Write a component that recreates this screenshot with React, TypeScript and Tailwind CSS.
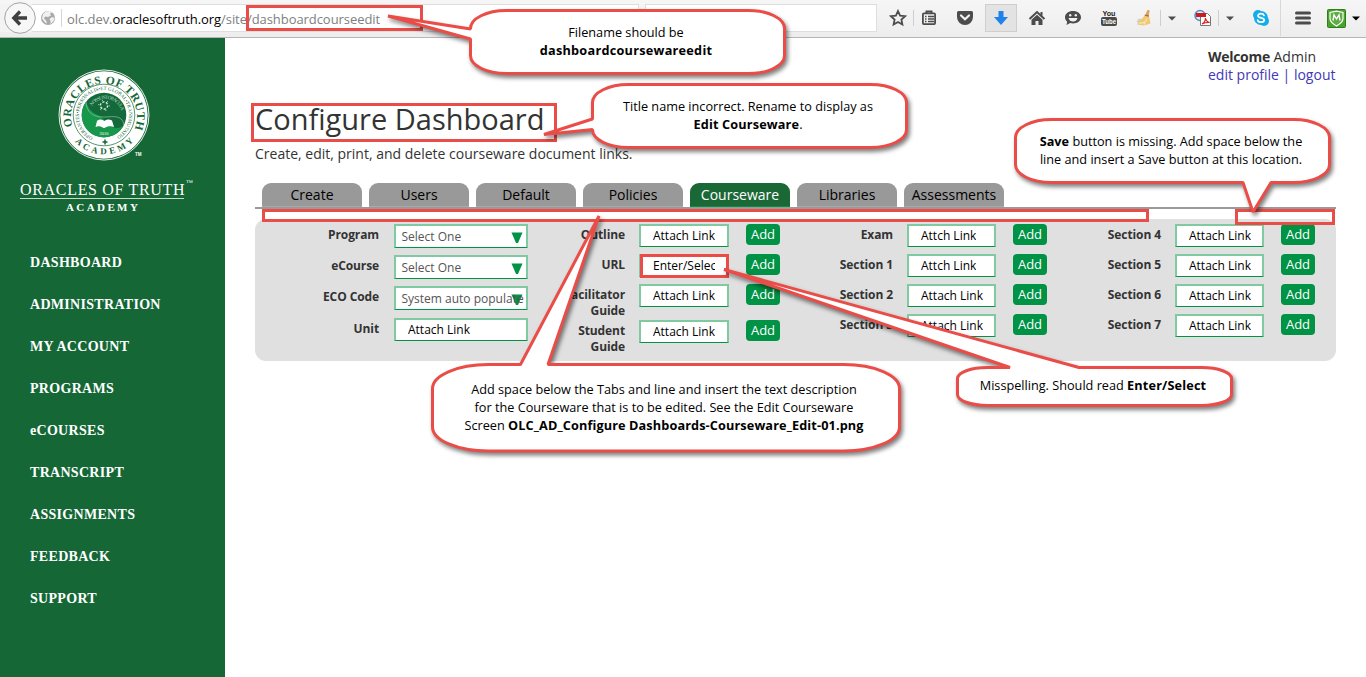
import type { ReactNode } from "react";

const RED = "#ea4d47";

function Sep({ className }: { className: string }) {
  return <span className={`h-4 w-px shrink-0 bg-[#c9cfd8] ${className}`} />;
}

function Caret({ className }: { className: string }) {
  return (
    <svg className={`shrink-0 ${className}`} width="8" height="5" viewBox="0 0 8 5">
      <path d="M0 .5h8L4 4.500z" fill="currentColor" />
    </svg>
  );
}

function Cell({ children, className = "w-9" }: { children: ReactNode; className?: string }) {
  return <span className={`flex shrink-0 items-center justify-center ${className}`}>{children}</span>;
}

function BrowserBar() {
  return (
    <header className="flex h-[38px] w-full shrink-0 items-center border-b border-[#b5b5b5] bg-linear-to-b from-[#f6f6f6] to-[#ededed] pb-px text-[#4c4c4c]">
      <div className="relative -mt-px flex h-7 w-[639px] shrink-0 items-center border border-l-0 border-[#dedede] bg-white">
        <svg className="shrink-0" width="64" height="36" viewBox="0 0 64 36">
          <path d="M0 4h32v28H0z" fill="#f3f3f3" />
          <circle cx="20" cy="18" r="15.300" fill="#f7f7f7" stroke="#a3a3a3" />
          <path d="M27 18H15M20 11.500L13.800 18l6.200 6.500" fill="none" stroke="#404040" strokeWidth="3.300" />
          <circle cx="48" cy="18" r="7" fill="#a9a9a9" />
          <path d="M43 14l3-2.500 4-.5 2 1.500-2 1 1 2-3 1.500-3-.5-1 2 2 2 1 3-2-1-3-4zM52 17l2.500 1-1 3-3 3v-3l-1-2z" fill="#f1f1f1" />
          <path d="M61.500 9v18" stroke="#d4d4d4" />
        </svg>
        <span className="ml-[3px] mt-[4px] whitespace-nowrap font-['Open_Sans',sans-serif] text-[13px] tracking-[-0.06px] text-[#808080]">
          olc.dev.<span className="text-black">oraclesoftruth.org</span>/site/dashboardcourseedit
        </span>
      </div>
      <div className="-mt-px ml-[6px] h-7 w-[232px] shrink-0 border border-[#dedede] bg-white" />
      <Cell className="ml-[9px] w-6">
        <svg width="18" height="18" viewBox="0 0 18 18">
          <path d="M9 2l2.100 4.600 5 .6-3.700 3.400 1 4.900L9 13l-4.400 2.500 1-4.900L1.900 7.200l5-.6z" fill="none" stroke="currentColor" strokeWidth="1.800" />
        </svg>
      </Cell>
      <Sep className="ml-[3px]" />
      <Cell className="-ml-[3px] w-9">
        <svg width="16" height="16" viewBox="0 0 16 16">
          <path d="M5.500 3V1.500h5V3" fill="none" stroke="currentColor" strokeWidth="2" />
          <rect x="1.900" y="3.400" width="12.200" height="10.700" rx="1" fill="none" stroke="currentColor" strokeWidth="1.800" />
          <path d="M4 6.500h1.500M7 6.500h6M4 9h1.500M7 9h6M4 11.500h1.500M7 11.500h6" stroke="currentColor" strokeWidth="1.400" />
        </svg>
      </Cell>
      <Cell>
        <svg width="18" height="16" viewBox="0 0 18 16">
          <path d="M2.500 1h13A1.500 1.500 0 0117 2.500V7A8 8 0 011 7V2.500A1.500 1.500 0 012.500 1z" fill="currentColor" />
          <path d="M5 5.500l4 3.800 4-3.800" fill="none" stroke="#f2f2f2" strokeWidth="2.200" strokeLinecap="round" />
        </svg>
      </Cell>
      <Cell>
        <span className="-mt-px flex h-7 w-8 items-center justify-center border border-[#cfcfcf] bg-[#e3e3e3]">
          <svg width="16" height="16" viewBox="0 0 16 16">
            <path d="M5.500 1h5v6H15l-7 8-7-8h4.500z" fill="#1e82e8" />
          </svg>
        </span>
      </Cell>
      <Cell>
        <svg width="18" height="16" viewBox="0 0 18 16">
          <path d="M1.500 9L9 2l7.500 7M13.500 2v4" fill="none" stroke="currentColor" strokeWidth="2" />
          <path d="M9 4.800l5.500 5V15h-4v-4h-3v4h-4V9.800z" fill="currentColor" />
        </svg>
      </Cell>
      <Cell>
        <svg width="18" height="16" viewBox="0 0 18 16">
          <path d="M9 1c4.500 0 8 2.700 8 6.300s-3.500 6.200-8 6.200c-1 0-2-.1-2.800-.4L2.500 15l.7-3.200C1.800 10.700 1 9.100 1 7.300 1 3.700 4.500 1 9 1z" fill="currentColor" />
          <circle cx="6.200" cy="5.300" r="1.200" fill="#f2f2f2" />
          <circle cx="11.800" cy="5.300" r="1.200" fill="#f2f2f2" />
          <path d="M4.500 8h9c-.6 2.400-2.300 3.500-4.500 3.500S5.100 10.400 4.500 8z" fill="#f2f2f2" />
        </svg>
      </Cell>
      <Cell>
        <svg width="18" height="20" viewBox="0 0 18 20">
          <rect x="1" y="9" width="16" height="9" rx="2" fill="#4a4a4a" />
          <text x="9" y="8" textAnchor="middle" textLength="13" lengthAdjust="spacingAndGlyphs" fontSize="8" fontWeight="bold" fill="#222" fontFamily="Liberation Sans">You</text>
          <text x="9" y="16.300" textAnchor="middle" textLength="14" lengthAdjust="spacingAndGlyphs" fontSize="8" fontWeight="bold" fill="#fff" fontFamily="Liberation Sans">Tube</text>
        </svg>
      </Cell>
      <Cell className="w-[33px]">
        <svg width="16" height="16" viewBox="0 0 16 16">
          <path d="M11.500 0l2 .6-.6 4.600L14.500 13.500l-6.500 2L1 14.500 3 11l3.500-3L9.300 4.700z" fill="#efc872" />
          <path d="M11.500 0l2 .6-.8 4.600-3-.5z" fill="#d6a262" />
          <path d="M8.800 5.200l4 .8" stroke="#b8674a" strokeWidth="1.300" />
          <path d="M3 13.500c2-1.600 4 .3 5.500-1.500M8 14.500l3-6" stroke="#f9e6b3" strokeWidth="1.200" fill="none" />
          <path d="M.5 11.500L3 8.500l2.500.5-3.500 4z" fill="#d0d0d0" />
        </svg>
      </Cell>
      <Sep className="" />
      <Caret className="ml-[7px]" />
      <Cell className="ml-[18px] w-[18px]">
        <svg width="18" height="18" viewBox="0 0 18 18">
          <circle cx="6" cy="6.500" r="5" fill="#dcebf8" stroke="#5b8ac6" strokeWidth="1.500" />
          <path d="M6.500 4.500h7l3 3v9h-10z" fill="#fff" stroke="#777" />
          <path d="M2 4h10v4H2z" fill="#c81e1e" />
          <path d="M8 15c2.500-1.500 3.500-4 3.500-6 .6 3 2 4.200 4.200 4.500-3-.2-5.200.3-7.700 1.500z" fill="none" stroke="#d22" strokeWidth="1.200" />
        </svg>
      </Cell>
      <Sep className="ml-[6px]" />
      <Caret className="ml-[7px]" />
      <Cell className="ml-[18px] w-[18px]">
        <svg width="18" height="18" viewBox="0 0 18 18">
          <circle cx="6" cy="6" r="5" fill="#14adeb" />
          <circle cx="12" cy="12" r="5" fill="#14adeb" />
          <circle cx="9" cy="9" r="7" fill="#14adeb" />
          <path d="M12 6.500C11.500 5 10.300 4.700 9 4.700c-1.600 0-3 .7-3 2 0 2.700 6.200 1.500 6.200 4.200 0 1.500-1.500 2.300-3.200 2.300S6 12.500 5.700 11.200" fill="none" stroke="#fff" strokeWidth="1.700" strokeLinecap="round" />
        </svg>
      </Cell>
      <span className="ml-[10px] h-9 w-px shrink-0 bg-[#d8d8d8]" />
      <Cell className="ml-[14px] w-4">
        <svg width="16" height="14" viewBox="0 0 16 14">
          <path d="M1.500 2h13M1.500 7h13M1.500 12h13" stroke="currentColor" strokeWidth="3" strokeLinecap="round" />
        </svg>
      </Cell>
      <Cell className="ml-[16px] w-[19px]">
        <svg width="19" height="19" viewBox="0 0 19 19">
          <rect x=".5" y=".5" width="18" height="18" rx="1" fill="#4aa42c" stroke="#2f7d1b" />
          <path d="M9.500 2.200l6.500 1.300v6c0 3.500-3 5.500-6.500 7.500C6 15 3 13 3 9.500v-6z" fill="#5fae45" stroke="#fff" strokeWidth="1.200" />
          <path d="M6 11.500l1-5.500 2.500 4L12 6l1 5.500" fill="none" stroke="#fff" strokeWidth="1.400" />
        </svg>
      </Cell>
      <Caret className="ml-[6px] text-black" />
    </header>
  );
}

function Seal() {
  return (
    <svg width="94" height="94" viewBox="-47 -47 94 94" fontFamily="'Liberation Serif', serif">
      <defs>
        <path id="outerTop" d="M-31.500 11.500A33 33 0 1 1 31.500 11.500" />
        <path id="outerBottom" d="M-33 22A40 40 0 0 0 33 22" />
        <path id="innerTop" d="M-11 22.500A25 25 0 1 1 11 22.500" />
        <path id="innerArc" d="M-12 -9A15 15 0 0 1 15 9" />
      </defs>
      <circle r="45" fill="none" stroke="#fff" strokeWidth=".9" />
      <circle r="43.700" fill="#fff" />
      <circle r="30.800" fill="none" stroke="#156736" strokeWidth=".7" />
      <circle r="22.300" fill="#13693a" />
      <path d="M-22.300 0A22.300 22.300 0 0 0 20 10C14 16 4 12 0 5C-4 -2 -12 2 -18 -13A22.300 22.300 0 0 0 -22.300 0z" fill="#17974c" />
      <path d="M-18 -13C-17 0 -8 2 0 2S18 -1 20 10" fill="none" stroke="#9fd0ae" strokeWidth=".6" />
      <g fill="#156736">
        <text fontSize="11.500" fontWeight="bold"><textPath href="#outerTop" textLength="126">ORACLES OF TRUTH</textPath></text>
        <text fontSize="9" fontWeight="bold"><textPath href="#outerBottom" startOffset="6" textLength="66">ACADEMY</textPath></text>
        <text fontSize="5"><textPath href="#innerTop" textLength="132">OPERANTES•PERSONALIS•ET GLOBAL•TRANSMUTATIO</textPath></text>
        <path d="M1 24.500v5M-1.500 27h5" stroke="#156736" strokeWidth="1.500" />
      </g>
      <text fontSize="5" fill="#b9dcc4"><textPath href="#innerArc" textLength="37">NOS SUNT ORACULA</textPath></text>
      <circle cy="-9.500" r="3.600" fill="none" stroke="#d9eddf" strokeWidth="1.400" strokeDasharray="2.200 1.500" />
      <circle cy="-9.500" r="5.300" fill="none" stroke="#d9eddf" strokeWidth="1" strokeDasharray="1 4.550" />
      <path d="M-8.500 12L-7 6C-5 4-2 4 0.500 6c2-2 5-2 7.500-.5L10 12C6.500 10.500 3.500 11 .5 13h-1C-3 11-6 10.500-8.500 12z" fill="#fff" />
      <text y="19.500" textAnchor="middle" fontSize="4.500" fill="#fff">2010</text>
      <text x="31" y="41" fontSize="4.500" fontWeight="bold" fill="#fff" fontFamily="Liberation Sans">TM</text>
    </svg>
  );
}

const menu = ["DASHBOARD", "ADMINISTRATION", "MY ACCOUNT", "PROGRAMS", "eCOURSES", "TRANSCRIPT", "ASSIGNMENTS", "FEEDBACK", "SUPPORT"];

function Sidebar() {
  return (
    <aside className="flex w-[225px] shrink-0 flex-col bg-[#156736] font-['Liberation_Serif',serif] text-white">
      <div className="ml-[57px] mt-[30px] h-[94px]">
        <Seal />
      </div>
      <div className="ml-5 mt-[17px] flex h-[22px] w-[175px] items-start">
        <span className="h-[20px] w-[164px] shrink-0 whitespace-nowrap border-b border-[#c5dccd] text-[16px] leading-[21px] tracking-[0.68px]">ORACLES OF TRUTH</span>
        <span className="ml-[2px] text-[7px] leading-[9px]">™</span>
      </div>
      <div className="ml-[66px] text-[11px] font-bold leading-[12px] tracking-[2.4px]">ACADEMY</div>
      <nav className="ml-[30px] mt-[29px] flex flex-col">
        {menu.map((m) => (
          <a key={m} className="h-[42px] text-[14px] font-bold leading-[42px] tracking-[0.3px]">
            {m}
          </a>
        ))}
      </nav>
    </aside>
  );
}

function Field({ text, width = "w-[89px] pr-[10px]" }: { text: string; width?: string }) {
  return (
    <div className={`flex h-[23px] shrink-0 items-center border-2 border-b border-[#7fcaa0] border-b-[#009245] bg-white pl-3 text-[12px] text-black ${width}`}>
      <span className="overflow-hidden whitespace-nowrap">{text}</span>
    </div>
  );
}

function Select({ text }: { text: string }) {
  return (
    <div className="relative flex h-6 w-[134px] shrink-0 items-center border-2 border-b border-[#7fcaa0] border-b-[#009245] bg-white pl-[5.5px] text-[12px] text-[#555]">
      <svg className="absolute right-[3px] top-[6px]" width="12" height="12" viewBox="0 0 12 12">
        <path d="M.5 .500h11L7 11H5z" fill="#009245" />
      </svg>
      <span className="relative whitespace-nowrap">{text}</span>
    </div>
  );
}

function Label({ children, className }: { children: ReactNode; className: string }) {
  return (
    <div className={`shrink-0 pt-[3px] text-right text-[12px] font-bold leading-4 tracking-[-0.1px] text-[#333] ${className}`}>{children}</div>
  );
}

interface Item {
  label: string;
  text: string;
  height: string;
}

function LinkColumn({ items, label, field }: { items: Item[]; label: string; field?: string }) {
  return (
    <div className="flex flex-col">
      {items.map((it) => (
        <div key={it.label} className={`flex items-start ${it.height}`}>
          <Label className={label}>{it.label}</Label>
          <div className="flex gap-[17px] pl-3.5">
            <Field text={it.text} width={field} />
            <button className="h-[21px] w-[34px] rounded-[4px] bg-[#009245] text-[13px] leading-[21px] text-white">Add</button>
          </div>
        </div>
      ))}
    </div>
  );
}

const colA: Item[] = [
  { label: "Outline", text: "Attach Link", height: "h-[30px]" },
  { label: "URL", text: "Enter/Select", height: "h-[30px]" },
  { label: "Facilitator Guide", text: "Attach Link", height: "h-[36px]" },
  { label: "Student Guide", text: "Attach Link", height: "h-[36px]" },
];
const colB: Item[] = [
  { label: "Exam", text: "Attch Link", height: "h-[30px]" },
  { label: "Section 1", text: "Attch Link", height: "h-[30px]" },
  { label: "Section 2", text: "Attach Link", height: "h-[30px]" },
  { label: "Section 3", text: "Attach Link", height: "h-[30px]" },
];
const colC: Item[] = [4, 5, 6, 7].map((n) => ({ label: `Section ${n}`, text: "Attach Link", height: "h-[30px]" }));

const tabs = ["Create", "Users", "Default", "Policies", "Courseware", "Libraries", "Assessments"];

function Main() {
  return (
    <main className="flex min-w-0 flex-1 flex-col bg-white pl-[30px] pr-[30px] font-['Open_Sans',sans-serif] text-[#333]">
      <div className="mt-[10px] flex h-9 flex-col self-end text-[14px] leading-[18px]">
        <span><b className="tracking-[-0.3px]">Welcome</b> Admin</span>
        <span className="w-[128px] whitespace-nowrap text-[#4039b8]">edit profile | logout</span>
      </div>
      <h1 className="mt-[15px] h-[40px] whitespace-nowrap text-[29px] leading-[40px]">Configure Dashboard</h1>
      <p className="mt-[5px] h-5 text-[14px] leading-5">Create, edit, print, and delete courseware document links.</p>
      <div className="mt-[19px] flex h-[26px] gap-[7px] border-b-2 border-[#999] pl-[7px]">
        {tabs.map((t) => (
          <div
            key={t}
            className={
              t === "Courseware"
                ? "h-6 w-[100px] rounded-t-[9px] border-b border-[#009245] bg-[#1a6836] text-center text-[14px] leading-6 text-white"
                : "h-6 w-[100px] rounded-t-[9px] border-b border-[#aaa] bg-[#999] text-center text-[14px] leading-6 text-black"
            }
          >
            {t}
          </div>
        ))}
      </div>
      <section className="mt-[10px] flex h-[142px] items-start rounded-[11px] bg-[#e0e0e0] pt-[5px]">
        <div className="flex flex-col">
          {["Program", "eCourse", "ECO Code"].map((l) => (
            <div key={l} className="flex h-[31px] items-start gap-[15px]">
              <Label className="w-[124px]">{l}</Label>
              <Select text={l === "ECO Code" ? "System auto populate" : "Select One"} />
            </div>
          ))}
          <div className="mt-px flex items-start gap-[15px]">
            <Label className="w-[124px]">Unit</Label>
            <Field text="Attach Link" width="w-[134px] pr-3" />
          </div>
        </div>
        <LinkColumn items={colA} label="w-[97px] pl-7" field="w-[90px] pr-3" />
        <LinkColumn items={colB} label="w-[113px]" />
        <LinkColumn items={colC} label="w-[114px]" />
      </section>
    </main>
  );
}

function bubblePath(l: number, t: number, r: number, b: number, rx: number, ry: number, side: "left" | "top" | "bottom", tail: number[][]) {
  const pts = tail.map(([x, y]) => `L${x} ${y}`).join("");
  return (
    `M${l + rx} ${t}` + (side === "top" ? pts : "") +
    `L${r - rx} ${t}A${rx} ${ry} 0 0 1 ${r} ${t + ry}L${r} ${b - ry}A${rx} ${ry} 0 0 1 ${r - rx} ${b}` +
    (side === "bottom" ? pts : "") +
    `L${l + rx} ${b}A${rx} ${ry} 0 0 1 ${l} ${b - ry}` + (side === "left" ? pts : "") +
    `L${l} ${t + ry}A${rx} ${ry} 0 0 1 ${l + rx} ${t}Z`
  );
}

const bubbles = [
  bubblePath(470.5, 10.500, 784.5, 73.500, 36, 18, "left", [[470.5, 39], [388, 16], [470.5, 29]]),
  bubblePath(592.5, 84.500, 906.5, 147.500, 36, 18, "left", [[592.5, 129.500], [544, 134.500], [592.5, 119]]),
  bubblePath(1015.5, 119.500, 1329.500, 182.500, 36, 18, "bottom", [[1271, 182.500], [1253, 212], [1243, 182.500]]),
  bubblePath(432.5, 364.500, 899.500, 451, 56, 24, "top", [[520.500, 364.500], [599, 216], [548, 364.500]]),
  bubblePath(957.500, 367.500, 1231.500, 405.500, 30, 11, "top", [[1010, 367.500], [724, 269.500], [1079, 367.500]]),
];

const boxes = [
  [246, 5, 177, 26],
  [251, 103, 306, 39],
  [262, 209, 887, 13],
  [1235, 209, 100, 16],
  [640, 254, 89, 24],
];

function Note({ className, children }: { className: string; children: ReactNode }) {
  return (
    <div className={`absolute whitespace-nowrap text-center font-['Open_Sans',sans-serif] text-[12.7px] leading-[18px] text-black ${className}`}>{children}</div>
  );
}

function Annotations() {
  return (
    <div className="pointer-events-none absolute inset-0">
      <svg width="1366" height="677" viewBox="0 0 1366 677">
        {boxes.map(([x, y, w, h]) => (
          <rect key={`${x}-${y}`} x={x + 1.5} y={y + 1.5} width={w - 3} height={h - 3} fill="none" stroke={RED} strokeWidth="3" />
        ))}
        <g className="drop-shadow-[2px_3px_2px_rgba(0,0,0,0.5)]">
          {bubbles.map((d) => (
            <path key={d} d={d} fill="#fff" stroke={RED} strokeWidth="3" strokeLinejoin="bevel" />
          ))}
        </g>
      </svg>
      <Note className="left-[471px] top-[23px] w-[310px]">
        Filename should be<br /><b className="tracking-[0.26px]">dashboardcoursewareedit</b>
      </Note>
      <Note className="left-[593px] top-[97px] w-[310px]">
        Title name incorrect. Rename to display as<br /><b className="tracking-[0.15px]">Edit Courseware</b>.
      </Note>
      <Note className="left-[1016px] top-[132px] w-[310px]">
        <b>Save</b> button is missing. Add space below the<br />line and insert a Save button at this location.
      </Note>
      <Note className="left-[434px] top-[380px] w-[460px]">
        Add space below the Tabs and line and insert the text description<br />for the Courseware that is to be edited. See the Edit Courseware<br />
        Screen <b className="tracking-[0.12px]">OLC_AD_Configure Dashboards-Courseware_Edit-01.png</b>
      </Note>
      <Note className="left-[958px] top-[376px] w-[270px]">
        Misspelling. Should read <b className="tracking-[0.15px]">Enter/Select</b>
      </Note>
    </div>
  );
}

export default function App() {
  return (
    <div className="relative flex h-[677px] w-[1366px] flex-col overflow-hidden bg-white">
      <BrowserBar />
      <div className="flex min-h-0 flex-1">
        <Sidebar />
        <Main />
      </div>
      <Annotations />
    </div>
  );
}
